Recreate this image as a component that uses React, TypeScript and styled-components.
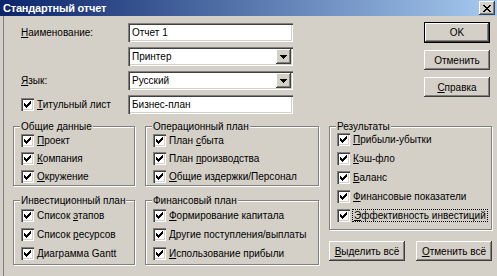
import styled, { createGlobalStyle } from "styled-components";

const GlobalStyle = createGlobalStyle`
  html, body {
    margin: 0;
    padding: 0;
  }
  body {
    background: #d4d0c8;
    font-family: "Liberation Sans", Arial, sans-serif;
    font-size: 10px;
    color: #000;
  }
`;

const Window = styled.div`
  width: 497px;
  height: 276px;
  box-sizing: border-box;
  background: #d4d0c8;
  overflow: hidden;
  display: flex;
  flex-direction: column;
`;

const TitleBar = styled.div`
  height: 16px;
  box-sizing: border-box;
  padding: 0 2px 0 3px;
  display: flex;
  align-items: center;
  justify-content: space-between;
  background: linear-gradient(to right, #0a246a, #a6caf0);
  color: #fff;
  font-weight: bold;
  font-size: 11px;
  letter-spacing: -0.2px;
`;

const CloseButton = styled.div`
  width: 16px;
  height: 14px;
  background: #d4d0c8;
  box-shadow: inset -1px -1px 0 #404040, inset 1px 1px 0 #fff,
    inset -2px -2px 0 #808080;
  display: flex;
  align-items: center;
  justify-content: center;
`;

const Body = styled.div`
  flex: 1;
  margin-left: 3px;
  border-left: 1px solid #808080;
  padding: 7px 5px 0 9px;
`;

const TopSection = styled.div`
  display: grid;
  grid-template-columns: 107px 165px 1fr 66px;
  grid-template-rows: repeat(4, 19px);
  row-gap: 5px;
  padding: 0 2px 0 8px;
`;

const Label = styled.div`
  grid-column: 1;
  display: flex;
  align-items: center;
  white-space: nowrap;
`;

const ButtonColumn = styled.div`
  grid-column: 4;
  grid-row: 1 / 5;
  display: flex;
  flex-direction: column;
  gap: 7px;
  margin-top: -1px;
`;

const Button = styled.div<{ $default?: boolean; $width?: number }>`
  width: ${({ $width }) => ($width ? `${$width}px` : "100%")};
  height: ${({ $default }) => ($default ? "21px" : "20px")};
  box-sizing: border-box;
  display: flex;
  align-items: center;
  justify-content: center;
  white-space: nowrap;
  background: #d4d0c8;
  border: ${({ $default }) => ($default ? "1px solid #000" : "none")};
  box-shadow: inset -1px -1px 0 #404040, inset 1px 1px 0 #fff,
    inset -2px -2px 0 #808080;
`;

const Field = styled.div`
  grid-column: 2;
  display: flex;
  align-items: center;
  background: #fff;
  padding-left: 4px;
  box-shadow: inset 1px 1px 0 #808080, inset 2px 2px 0 #404040,
    inset -1px -1px 0 #fff, inset -2px -2px 0 #d4d0c8;
`;

const FieldText = styled.span`
  flex: 1;
`;

const DropButton = styled.div`
  width: 15px;
  height: 15px;
  margin-right: 2px;
  background: #d4d0c8;
  box-shadow: inset -1px -1px 0 #404040, inset 1px 1px 0 #fff,
    inset -2px -2px 0 #808080;
  display: flex;
  align-items: center;
  justify-content: center;
`;

const U = styled.span`
  text-decoration: underline;
`;

const Focus = styled.span`
  outline: 1px dotted #000;
  outline-offset: 0;
  padding: 0 1px;
`;

const GroupsGrid = styled.div`
  display: grid;
  grid-template-columns: 122px 174px 1fr;
  column-gap: 10px;
  margin-top: 12px;
`;

const Column = styled.div`
  display: flex;
  flex-direction: column;
  gap: 14px;
`;

const Group = styled.div<{ $padTop: number; $padBottom: number }>`
  position: relative;
  border: 1px solid #808080;
  box-shadow: inset 1px 1px 0 #fff, 1px 1px 0 #fff;
  padding: ${({ $padTop, $padBottom }) => `${$padTop}px 0 ${$padBottom}px 7px`};
`;

const Legend = styled.span`
  position: absolute;
  top: -7px;
  left: 6px;
  padding: 0 1px;
  line-height: 13px;
  white-space: nowrap;
  background: #d4d0c8;
`;

const CheckRow = styled.div<{ $height: number }>`
  height: ${({ $height }) => $height}px;
  display: flex;
  align-items: center;
  gap: 3px;
  white-space: nowrap;
`;

const Box = styled.div`
  width: 13px;
  height: 13px;
  flex: none;
  background: #fff;
  box-shadow: inset 1px 1px 0 #808080, inset 2px 2px 0 #404040,
    inset -1px -1px 0 #fff, inset -2px -2px 0 #d4d0c8;
`;

const ButtonRow = styled.div`
  display: flex;
  justify-content: space-between;
  margin-top: 11px;
`;

function Check() {
  return (
    <Box>
      <svg width="13" height="13" viewBox="0 0 13 13" shapeRendering="crispEdges">
        <path
          d="M3 5h1v3H3z M4 6h1v3H4z M5 7h1v3H5z M6 6h1v3H6z M7 5h1v3H7z M8 4h1v3H8z M9 3h1v3H9z"
          fill="#000"
        />
      </svg>
    </Box>
  );
}

function Arrow() {
  return (
    <svg width="7" height="4" viewBox="0 0 7 4" shapeRendering="crispEdges">
      <path d="M0 0h7v1H0z M1 1h5v1H1z M2 2h3v1H2z M3 3h1v1H3z" fill="#000" />
    </svg>
  );
}

function Item({ children, height }: { children: React.ReactNode; height: number }) {
  return (
    <CheckRow $height={height}>
      <Check />
      <span>{children}</span>
    </CheckRow>
  );
}

export default function App(): JSX.Element {
  return (
    <Window>
      <GlobalStyle />
      <TitleBar>
        Стандартный отчет
        <CloseButton>
          <svg width="8" height="7" viewBox="0 0 8 7" shapeRendering="crispEdges">
            <path
              d="M0 0h2v1H0z M6 0h2v1H6z M1 1h2v1H1z M5 1h2v1H5z M2 2h4v1H2z M3 3h2v1H3z M2 4h4v1H2z M1 5h2v1H1z M5 5h2v1H5z M0 6h2v1H0z M6 6h2v1H6z"
              fill="#000"
            />
          </svg>
        </CloseButton>
      </TitleBar>
      <Body>
        <TopSection>
          <Label>
            <span>
              <U>Н</U>аименование:
            </span>
          </Label>
          <Field>
            <FieldText>Отчет 1</FieldText>
          </Field>
          <ButtonColumn>
            <Button $default>OK</Button>
            <Button>Отменить</Button>
            <Button>
              <span>
                <U>С</U>правка
              </span>
            </Button>
          </ButtonColumn>
          <Label />
          <Field>
            <FieldText>Принтер</FieldText>
            <DropButton>
              <Arrow />
            </DropButton>
          </Field>
          <Label>
            <span>
              <U>Я</U>зык:
            </span>
          </Label>
          <Field>
            <FieldText>Русский</FieldText>
            <DropButton>
              <Arrow />
            </DropButton>
          </Field>
          <Label>
            <CheckRow $height={19}>
              <Check />
              <span>
                <U>Т</U>итульный лист
              </span>
            </CheckRow>
          </Label>
          <Field>
            <FieldText>Бизнес-план</FieldText>
          </Field>
        </TopSection>

        <GroupsGrid>
          <Column>
            <Group $padTop={4} $padBottom={0}>
              <Legend>Общие данные</Legend>
              <Item height={18}>
                <U>П</U>роект
              </Item>
              <Item height={18}>
                <U>К</U>омпания
              </Item>
              <Item height={18}>
                <U>О</U>кружение
              </Item>
            </Group>
            <Group $padTop={5} $padBottom={1}>
              <Legend>Инвестиционный план</Legend>
              <Item height={19}>
                Список <U>э</U>тапов
              </Item>
              <Item height={19}>
                Список <U>р</U>есурсов
              </Item>
              <Item height={19}>
                <U>Д</U>иаграмма Gantt
              </Item>
            </Group>
          </Column>
          <Column>
            <Group $padTop={4} $padBottom={0}>
              <Legend>Операционный план</Legend>
              <Item height={18}>
                План <U>с</U>быта
              </Item>
              <Item height={18}>
                План <U>п</U>роизводства
              </Item>
              <Item height={18}>
                <U>О</U>бщие издержки/Персонал
              </Item>
            </Group>
            <Group $padTop={5} $padBottom={1}>
              <Legend>Финансовый план</Legend>
              <Item height={19}>
                <U>Ф</U>ормирование капитала
              </Item>
              <Item height={19}>
                <U>Д</U>ругие поступления/выплаты
              </Item>
              <Item height={19}>
                <U>И</U>спользование прибыли
              </Item>
            </Group>
          </Column>
          <div>
            <Group $padTop={3} $padBottom={4}>
              <Legend>Результаты</Legend>
              <Item height={19}>
                <U>П</U>рибыли-убытки
              </Item>
              <Item height={19}>
                <U>К</U>эш-фло
              </Item>
              <Item height={19}>
                <U>Б</U>аланс
              </Item>
              <Item height={19}>
                <U>Ф</U>инансовые показатели
              </Item>
              <Item height={19}>
                <Focus>
                  <U>Э</U>ффективность инвестиций
                </Focus>
              </Item>
            </Group>
            <ButtonRow>
              <Button $width={76}>
                <span>
                  <U>В</U>ыделить всё
                </span>
              </Button>
              <Button $width={76}>
                <span>
                  <U>О</U>тменить всё
                </span>
              </Button>
            </ButtonRow>
          </div>
        </GroupsGrid>
      </Body>
    </Window>
  );
}
